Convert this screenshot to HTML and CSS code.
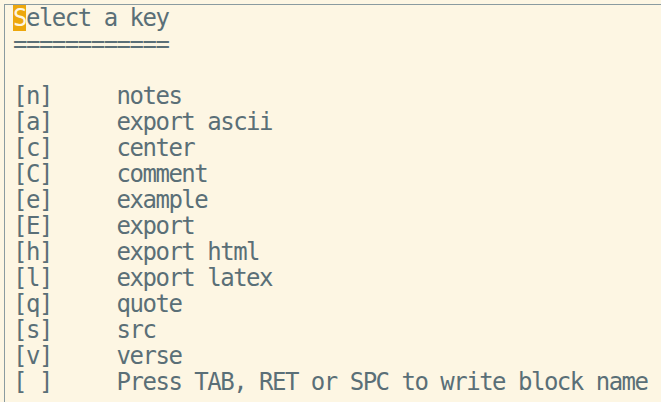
FILE: index.html
```html
<!DOCTYPE html>
<html>
<head>
<meta charset="utf-8">
<link rel="stylesheet" href="styles.css">
</head>
<body>
<div class="window">
<div class="line"><span class="cursor">S</span>elect a key</div>
<div class="line">============</div>
<div class="line"> </div>
<div class="line">[n]     notes</div>
<div class="line">[a]     export ascii</div>
<div class="line">[c]     center</div>
<div class="line">[C]     comment</div>
<div class="line">[e]     example</div>
<div class="line">[E]     export</div>
<div class="line">[h]     export html</div>
<div class="line">[l]     export latex</div>
<div class="line">[q]     quote</div>
<div class="line">[s]     src</div>
<div class="line">[v]     verse</div>
<div class="line">[ ]     Press TAB, RET or SPC to write block name</div>
</div>
</body>
</html>
```
FILE: styles.css
```css
html, body {
  margin: 0;
  padding: 0;
  background: #fdf6e3;
}
body {
  padding: 4px 0 0 4px;
  height: 402px;
  box-sizing: border-box;
  overflow: hidden;
}
.window {
  border-top: 1px solid #8a9ba0;
  border-left: 1px solid #8a9ba0;
  padding-left: 8px;
  height: 100%;
  box-sizing: border-box;
  font-family: "DejaVu Sans Mono", monospace;
  font-size: 24px;
  letter-spacing: -1.5px;
  color: #5a6f77;
}
.line {
  height: 26px;
  line-height: 26px;
  white-space: pre;
}
.cursor {
  display: inline-block;
  background: #eda70c;
  color: #fdf6e3;
  height: 26px;
}
```
